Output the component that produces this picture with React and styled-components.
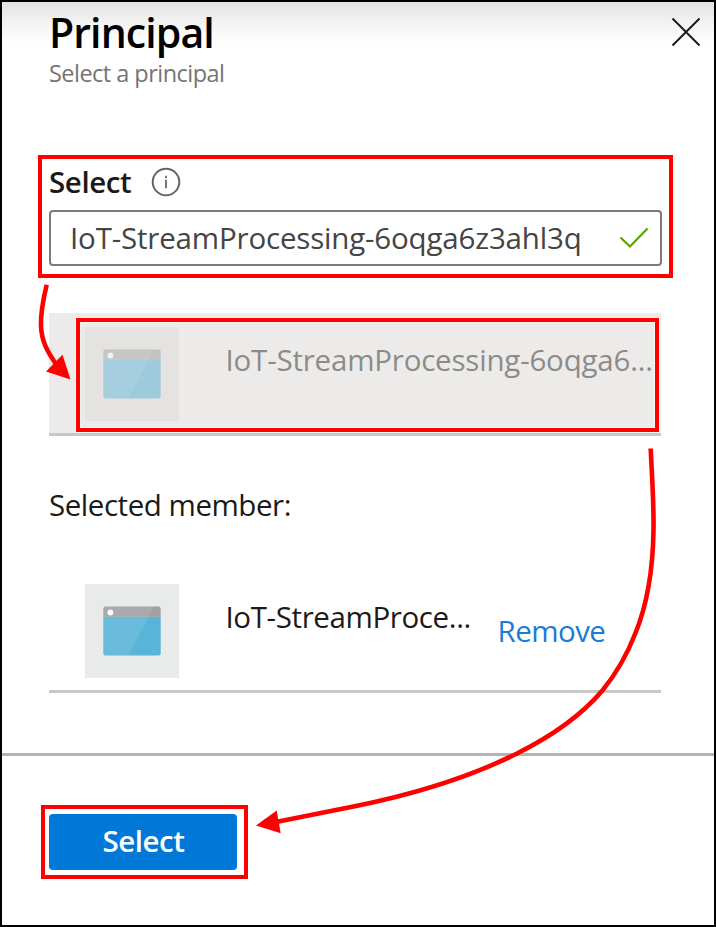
import React from "react";
import styled, { createGlobalStyle } from "styled-components";

const GlobalStyle = createGlobalStyle`
  *, *::before, *::after { box-sizing: border-box; }
  body { margin: 0; background: #fff; }
`;

const Panel = styled.section`
  position: relative;
  display: flex;
  flex-direction: column;
  width: 716px;
  height: 927px;
  overflow: hidden;
  border: 2px solid #000;
  background: linear-gradient(#e2e2e2, #f1f1f1 18px, #fff 42px) #fff;
  font-family: "Open Sans", "Noto Sans", sans-serif;
  color: #1b1a19;
`;

const Text = styled.span`
  display: block;
  white-space: nowrap;
  font-size: ${(p) => p.$size || 29.5}px;
  line-height: ${(p) => p.$line || 40}px;
  font-weight: ${(p) => p.$weight || 400};
  letter-spacing: ${(p) => p.$spacing || 0}px;
  color: ${(p) => p.$color || "inherit"};
`;

const Header = styled.header`
  display: flex;
  justify-content: space-between;
  height: 151px;
  padding: 3px 13px 0 47px;
`;

const Title = styled(Text).attrs({ as: "h1" })`
  margin: 0;
`;

const CloseButton = styled.button`
  width: 30px;
  height: 30px;
  margin-top: 12px;
  padding: 0;
  border: 0;
  background: none;
  svg { display: block; }
`;

const Callout = styled.div`
  position: absolute;
  inset: ${(p) => p.$inset};
  border: 4.6px solid #fe0000;
  outline: 1px solid ${(p) => p.$halo || "transparent"};
  box-shadow: inset 0 0 0 1px ${(p) => p.$halo || "transparent"};
  pointer-events: none;
`;

const Field = styled.div`
  position: relative;
  width: 613px;
  height: 113px;
  margin-left: 47px;
`;

const LabelRow = styled.label`
  display: flex;
  align-items: center;
  justify-content: space-between;
  width: 132px;
  height: 57px;
`;

const InputBox = styled.div`
  display: flex;
  align-items: center;
  justify-content: space-between;
  height: 56px;
  padding: 0 11px 0 19px;
  border: 2.5px solid #7d7b78;
  border-radius: 4px;
  background: #fff;
`;

const MemberRow = styled.div`
  position: relative;
  display: flex;
  width: 612px;
  height: ${(p) => p.$height}px;
  margin: ${(p) => p.$top}px 0 0 47px;
  padding: ${(p) => (p.$dim ? 14 : 0)}px 0 0 35.5px;
  border-bottom: 3px solid #c8c8c6;
  background: ${(p) => (p.$dim ? "#edebe9" : "none")};
`;

const Thumb = styled.div`
  display: grid;
  place-items: center;
  width: 94px;
  height: 94px;
  margin-right: 47px;
  background: ${(p) => (p.$dim ? "#e4e3e1" : "#e9ebea")};
  svg { opacity: ${(p) => (p.$dim ? 0.5 : 1)}; }
`;

const MemberName = styled.div`
  width: ${(p) => p.$width}px;
  padding-top: 13px;
`;

const RemoveLink = styled.a`
  padding-top: 27px;
`;

const Caption = styled.div`
  height: 40px;
  margin: 49px 0 0 47px;
`;

const Footer = styled.footer`
  flex: 1;
  margin-top: 60px;
  padding: 58px 0 0 47px;
  border-top: 3px solid #b4b4b4;
`;

const ButtonWrap = styled.div`
  position: relative;
  width: 188px;
  height: 56px;
`;

const PrimaryButton = styled.button`
  display: flex;
  align-items: center;
  justify-content: center;
  width: 100%;
  height: 100%;
  padding: 0 0 3px 1px;
  border: 0;
  border-radius: 4px;
  background: #0078d7;
  color: #fff;
  font-family: inherit;
`;

const Arrows = styled.svg`
  position: absolute;
  left: -2px;
  top: -2px;
  pointer-events: none;
`;

function AppIcon() {
  return (
    <svg width="58" height="50" viewBox="0 0 58 50">
      <path d="M0.3 10.5H57.7V47.2Q57.7 49.5 55.4 49.5H2.6Q0.3 49.5 0.3 47.2Z" fill="#59b4d9" />
      <path d="M0.3 10.8V2.8Q0.3 0.5 2.6 0.5H55.4Q57.7 0.5 57.7 2.8V10.8Z" fill="#a0a1a2" />
      <path d="M2.6 0.5H51L25.5 49.5H2.6Q0.3 49.5 0.3 47.2V2.8Q0.3 0.5 2.6 0.5Z" fill="#fff" opacity="0.1" />
      <circle cx="7.4" cy="6.4" r="2.9" fill="#fff" />
    </svg>
  );
}

export default function App() {
  return (
    <>
      <GlobalStyle />
      <Panel>
        <Header>
          <div>
            <Title $size={41} $line={55} $weight={600} $spacing={-0.9} $color="#000">Principal</Title>
            <Text $size={23.5} $line={26} $spacing={-0.53} $color="#767472">Select a principal</Text>
          </div>
          <CloseButton aria-label="Close">
            <svg width="30" height="30" viewBox="0 0 30 30">
              <path d="M1.5 1.5L28.5 28.5M28.5 1.5L1.5 28.5" stroke="#1b1b1b" strokeWidth="2" />
            </svg>
          </CloseButton>
        </Header>

        <Field>
          <LabelRow>
            <Text $weight={600} $spacing={-0.4}>Select</Text>
            <svg width="30" height="30" viewBox="0 0 30 30" fill="none" stroke="#666">
              <circle cx="15" cy="15" r="13.3" strokeWidth="2" />
              <path d="M15 12.8V21.3M15 8.8V11" strokeWidth="1.8" />
            </svg>
          </LabelRow>
          <InputBox>
            <Text $color="#444" $spacing={-0.18}>IoT-StreamProcessing-6oqga6z3ahl3q</Text>
            <svg width="30" height="22" viewBox="0 0 30 22">
              <path d="M1.5 10.5L11 19.5L28.5 1.5" fill="none" stroke="#57a300" strokeWidth="2.2" />
            </svg>
          </InputBox>
          <Callout $inset="2px -11px -12px -11px" />
        </Field>

        <MemberRow $dim $height={123} $top={47}>
          <Thumb $dim><AppIcon /></Thumb>
          <MemberName><Text $color="#8c8b8a" $spacing={-0.2}>IoT-StreamProcessing-6oqga6...</Text></MemberName>
          <Callout $halo="#f8f8f7" $inset="4.5px 2px 1.5px 27px" />
        </MemberRow>

        <Caption><Text $spacing={-0.46}>Selected member:</Text></Caption>

        <MemberRow $height={109} $top={59}>
          <Thumb><AppIcon /></Thumb>
          <MemberName $width={272}><Text $spacing={-0.38}>IoT-StreamProce...</Text></MemberName>
          <RemoveLink><Text $spacing={-0.55} $color="#1b7bd8">Remove</Text></RemoveLink>
        </MemberRow>

        <Footer>
          <ButtonWrap>
            <PrimaryButton><Text $weight={600} $spacing={-0.5}>Select</Text></PrimaryButton>
            <Callout $inset="-9.5px -10.5px -8.5px -8px" />
          </ButtonWrap>
        </Footer>

        <Arrows width="716" height="927" viewBox="0 0 716 927" fill="none" stroke="#fe0000" strokeWidth="4.6">
          <path d="M46.7 284.8C43.5 298 40.5 311 41 326C41.5 341 47.5 352 56 364" />
          <path d="M70.5 379.5L62.5 354.8L46 371.5Z" fill="#fe0000" stroke="none" />
          <path d="M650.7 448.5C652 478 654 505 653.5 530C653 565 649 600 635.5 633C627 655 616 674 602 691C579 718 548 738 517 753.5C466 779 410 795 356 806L276 822" />
          <path d="M256 825.5L276.7 810.5L280.7 833.3Z" fill="#fe0000" stroke="none" />
        </Arrows>
      </Panel>
    </>
  );
}
